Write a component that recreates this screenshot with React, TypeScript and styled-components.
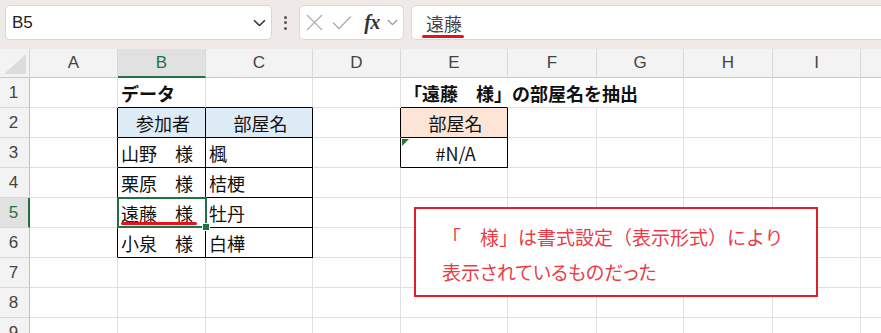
import React from 'react';
import styled, { createGlobalStyle } from 'styled-components';

const GlobalStyle = createGlobalStyle`
  html, body { margin: 0; padding: 0; background: #ffffff; }
  body { overflow: hidden; }
`;

const JP = `"Noto Sans CJK JP", "Noto Sans", sans-serif`;
const UI = `"Liberation Sans", Arial, sans-serif`;

const COLS = ['A', 'B', 'C', 'D', 'E', 'F', 'G', 'H', 'I', 'J'];
const COL_W = [88, 88, 107, 88, 107, 89, 87, 89, 88, 88];
const ROW_HEADER_W = 30;
const HEAD_H = 29;
const ROW_H = 30;
const ROWS = 9;
const GRID = '#e0e0e0';
const GREEN = '#217346';

const colLeft = (i: number) => ROW_HEADER_W + COL_W.slice(0, i).reduce((a, b) => a + b, 0);
const rowTop = (r: number) => HEAD_H + (r - 1) * ROW_H;

type CellDef = { text: string; bold?: boolean; center?: boolean; fill?: string };
const CELLS: Record<string, CellDef> = {
  B1: { text: 'データ', bold: true },
  E1: { text: '「遠藤　様」の部屋名を抽出', bold: true },
  B2: { text: '参加者', center: true, fill: '#ddebf7' },
  C2: { text: '部屋名', center: true, fill: '#ddebf7' },
  E2: { text: '部屋名', center: true, fill: '#fce4d6' },
  B3: { text: '山野　様' },
  C3: { text: '楓' },
  E3: { text: '#N/A', center: true },
  B4: { text: '栗原　様' },
  C4: { text: '桔梗' },
  B5: { text: '遠藤　様' },
  C5: { text: '牡丹' },
  B6: { text: '小泉　様' },
  C6: { text: '白樺' },
};

const TABLES = [
  { c0: 1, c1: 2, r0: 2, r1: 6 },
  { c0: 4, c1: 4, r0: 2, r1: 3 },
];
const OVERFLOW = new Set(['E1', 'F1']);

const rightColor = (r: number, c: number) => {
  if (TABLES.some(t => r >= t.r0 && r <= t.r1 && ((c >= t.c0 && c <= t.c1) || c === t.c0 - 1))) return '#000';
  if (OVERFLOW.has(COLS[c] + r)) return 'transparent';
  return GRID;
};
const bottomColor = (r: number, c: number) => {
  if (TABLES.some(t => c >= t.c0 && c <= t.c1 && ((r >= t.r0 && r <= t.r1) || r === t.r0 - 1))) return '#000';
  return GRID;
};

const Page = styled.div`
  width: 881px;
  height: 333px;
  overflow: hidden;
  display: flex;
  flex-direction: column;
  background: #fff;
`;

const Toolbar = styled.div`
  display: flex;
  align-items: flex-start;
  height: 49px;
  flex: none;
  box-sizing: border-box;
  padding: 5px 0 0 5px;
  background: #efeae8;
`;

const NameBox = styled.div`
  width: 267px;
  height: 35px;
  box-sizing: border-box;
  background: #fff;
  border: 1px solid #dcd6d4;
  border-radius: 5px;
  display: flex;
  align-items: center;
  justify-content: space-between;
  padding: 0 5px 0 6px;
  font: 17px ${UI};
  color: #222;
`;

const Dots = styled.div`
  width: 27px;
  height: 35px;
  display: flex;
  flex-direction: column;
  align-items: center;
  justify-content: center;
  gap: 2.5px;
  span {
    width: 3px;
    height: 3px;
    border-radius: 50%;
    background: #555;
  }
`;

const FxBox = styled.div`
  width: 105px;
  height: 35px;
  box-sizing: border-box;
  background: #fff;
  border: 1px solid #dcd6d4;
  border-radius: 5px;
  display: flex;
  align-items: center;
  padding: 0 0 0 5px;
`;

const IconSlot = styled.div<{ $w: number }>`
  width: ${p => p.$w}px;
  height: 33px;
  display: flex;
  align-items: center;
  justify-content: center;
`;

const FxText = styled.span`
  font: italic bold 20px "Liberation Serif", "DejaVu Serif", serif;
  color: #333;
  letter-spacing: -0.5px;
`;

const FormulaInput = styled.div`
  flex: 1;
  margin-left: 7px;
  margin-right: -10px;
  height: 35px;
  box-sizing: border-box;
  background: #fff;
  border: 1px solid #dcd6d4;
  border-radius: 5px;
  position: relative;
  display: flex;
  align-items: center;
  padding-left: 14px;
  font: 18px ${JP};
  color: #444;
`;

const RedMark = styled.div<{ $l: number; $t: number; $w: number }>`
  position: absolute;
  left: ${p => p.$l}px;
  top: ${p => p.$t}px;
  width: ${p => p.$w}px;
  height: 3px;
  border-radius: 2px;
  background: #e8111c;
  z-index: 3;
`;

const Sheet = styled.div`
  position: relative;
  display: grid;
  grid-template-columns: ${ROW_HEADER_W}px ${COL_W.map(w => w + 'px').join(' ')};
  grid-template-rows: ${HEAD_H}px repeat(${ROWS}, ${ROW_H}px);
`;

const Corner = styled.div`
  background: #f3f3f3;
  border-right: 1px solid #d4d4d4;
  border-bottom: 1px solid #c8c8c8;
  box-sizing: border-box;
  display: flex;
  align-items: flex-end;
  justify-content: flex-end;
  padding: 0 3px 3px 0;
`;

const ColHeader = styled.div<{ $sel?: boolean }>`
  box-sizing: border-box;
  background: ${p => (p.$sel ? '#e1e1e1' : '#f3f3f3')};
  border-right: 1px solid #d8d8d8;
  border-bottom: ${p => (p.$sel ? `2px solid ${GREEN}` : '1px solid #c8c8c8')};
  display: flex;
  align-items: center;
  justify-content: center;
  font: 17px ${UI};
  color: ${p => (p.$sel ? GREEN : '#444')};
  padding-top: ${p => (p.$sel ? 1 : 0)}px;
`;

const RowHeader = styled.div<{ $sel?: boolean }>`
  box-sizing: border-box;
  background: ${p => (p.$sel ? '#e1e1e1' : '#f3f3f3')};
  border-right: ${p => (p.$sel ? `2px solid ${GREEN}` : '1px solid #c0c0c0')};
  border-bottom: 1px solid #d8d8d8;
  display: flex;
  align-items: center;
  justify-content: center;
  font: 17px ${UI};
  color: ${p => (p.$sel ? GREEN : '#444')};
  padding-right: ${p => (p.$sel ? 1 : 2)}px;
`;

const Cell = styled.div<{ $right: string; $bottom: string; $fill?: string; $bold?: boolean; $center?: boolean }>`
  box-sizing: border-box;
  border-right: 1px solid ${p => p.$right};
  border-bottom: 1px solid ${p => p.$bottom};
  background: ${p => p.$fill || 'transparent'};
  display: flex;
  align-items: center;
  justify-content: ${p => (p.$center ? 'center' : 'flex-start')};
  padding: 1px 0 0 3px;
  white-space: nowrap;
  overflow: visible;
  font: ${p => (p.$bold ? 700 : 400)} 18px ${JP};
  color: #111;
  position: relative;
  z-index: ${p => (p.$bold ? 1 : 0)};
`;

const Selection = styled.div<{ $l: number; $t: number; $w: number; $h: number }>`
  position: absolute;
  left: ${p => p.$l}px;
  top: ${p => p.$t}px;
  width: ${p => p.$w}px;
  height: ${p => p.$h}px;
  box-sizing: border-box;
  border: 2px solid ${GREEN};
  pointer-events: none;
  z-index: 2;
`;

const FillHandle = styled.div`
  position: absolute;
  right: -5px;
  bottom: -5px;
  width: 6px;
  height: 6px;
  background: ${GREEN};
  border: 1px solid #fff;
`;

const ErrorFlag = styled.div<{ $l: number; $t: number }>`
  position: absolute;
  left: ${p => p.$l}px;
  top: ${p => p.$t}px;
  width: 0;
  height: 0;
  border-top: 7px solid #1d7a2e;
  border-right: 7px solid transparent;
  z-index: 2;
`;

const Note = styled.div<{ $l: number; $t: number }>`
  position: absolute;
  left: ${p => p.$l}px;
  top: ${p => p.$t}px;
  width: 404px;
  height: 90px;
  box-sizing: border-box;
  border: 2px solid #e41d2a;
  background: #fff;
  padding: 10px 0 0 26px;
  display: flex;
  flex-direction: column;
  z-index: 3;
`;

const NoteLine = styled.div<{ $tight?: boolean }>`
  font: 400 19px ${JP};
  line-height: 35px;
  color: #ec3b47;
  white-space: nowrap;
  font-feature-settings: ${p => (p.$tight ? '"palt"' : 'normal')};
`;

const Chevron = ({ w = 12, color = '#444' }: { w?: number; color?: string }) => (
  <svg width={w} height={w * 0.6} viewBox="0 0 12 7" fill="none">
    <polyline points="1,1 6,6 11,1" stroke={color} strokeWidth="1.4" />
  </svg>
);

export default function App() {
  const rows = Array.from({ length: ROWS }, (_, i) => i + 1);
  return (
    <Page>
      <GlobalStyle />
      <Toolbar>
        <NameBox>
          <span>B5</span>
          <Chevron w={13} color="#333" />
        </NameBox>
        <Dots>
          <span />
          <span />
          <span />
        </Dots>
        <FxBox>
          <IconSlot $w={19}>
            <svg width="17" height="17" viewBox="0 0 17 17">
              <path d="M1 1L16 16M16 1L1 16" stroke="#b0b0b0" strokeWidth="1.4" />
            </svg>
          </IconSlot>
          <IconSlot $w={35}>
            <svg width="20" height="15" viewBox="0 0 20 15" fill="none">
              <polyline points="1,7.5 7,13.5 19,1.5" stroke="#b0b0b0" strokeWidth="1.4" />
            </svg>
          </IconSlot>
          <IconSlot $w={26}>
            <FxText>fx</FxText>
          </IconSlot>
          <IconSlot $w={14}>
            <Chevron w={11} color="#999" />
          </IconSlot>
        </FxBox>
        <FormulaInput>
          遠藤
          <RedMark $l={10} $t={29} $w={42} />
        </FormulaInput>
      </Toolbar>
      <Sheet>
        <Corner>
          <svg width="22" height="20" viewBox="0 0 22 20">
            <polygon points="22,0 22,20 0,20" fill="#dcdcdc" />
          </svg>
        </Corner>
        {COLS.map(c => (
          <ColHeader key={c} $sel={c === 'B'}>
            {c}
          </ColHeader>
        ))}
        {rows.map(r => (
          <React.Fragment key={r}>
            <RowHeader $sel={r === 5}>{r}</RowHeader>
            {COLS.map((c, ci) => {
              const d = CELLS[c + r];
              return (
                <Cell
                  key={c + r}
                  $right={rightColor(r, ci)}
                  $bottom={bottomColor(r, ci)}
                  $fill={d?.fill}
                  $bold={d?.bold}
                  $center={d?.center}
                >
                  {d?.text}
                </Cell>
              );
            })}
          </React.Fragment>
        ))}
        <Selection $l={colLeft(1) - 1} $t={rowTop(5) - 1} $w={COL_W[1] + 2} $h={ROW_H + 1}>
          <FillHandle />
        </Selection>
        <RedMark $l={colLeft(1) + 3} $t={rowTop(5) + 24} $w={76} />
        <ErrorFlag $l={colLeft(4) + 1} $t={rowTop(3) + 1} />
        <Note $l={414} $t={158}>
          <NoteLine>「　様」は書式設定（表示形式）により</NoteLine>
          <NoteLine $tight>表示されているものだった</NoteLine>
        </Note>
      </Sheet>
    </Page>
  );
}
